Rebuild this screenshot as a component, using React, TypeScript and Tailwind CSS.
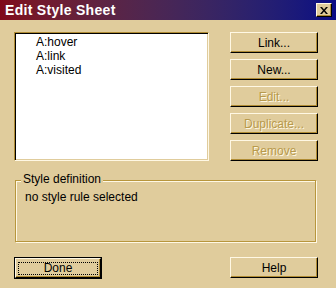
import React from 'react';

const FONT = { fontFamily: '"Liberation Sans", Arial, sans-serif' };

function Btn({ label, disabled, isDefault }: { label: string; disabled?: boolean; isDefault?: boolean }) {
  const inner = (
    <div
      className={`w-full h-full flex items-center justify-center border border-t-[#fff8e4] border-l-[#fff8e4] border-b-black border-r-black shadow-[inset_-1px_-1px_0_#b08c34] text-[12px] ${
        disabled ? 'text-[#b89a4c] [text-shadow:1px_1px_0_#fff8e4]' : 'text-black'
      }`}
    >
      {isDefault ? (
        <span className="w-[80px] h-[13px] border border-dotted border-black flex items-center justify-center">{label}</span>
      ) : (
        label
      )}
    </div>
  );
  if (isDefault) {
    return <div className="w-[88px] h-[22px] border border-black">{inner}</div>;
  }
  return <div className="w-[88px] h-[21px]">{inner}</div>;
}

export default function App() {
  return (
    <div className="w-[336px] h-[288px] bg-[#e0cc9c] flex flex-col overflow-hidden" style={FONT}>
      {/* Title bar */}
      <div className="h-[20px] bg-gradient-to-r from-[#80081a] to-[#0a0a84] flex items-center justify-between pl-[5px] pr-[4px]">
        <span className="text-white font-bold text-[14px] leading-none tracking-[0.3px]">Edit Style Sheet</span>
        <div className="w-[16px] h-[14px] bg-[#e0cc9c] border border-t-[#fff8e4] border-l-[#fff8e4] border-b-black border-r-black shadow-[inset_-1px_-1px_0_#b08c34] flex items-center justify-center">
          <svg width="8" height="7" viewBox="0 0 8 7">
            <path d="M0 0h2l2 2.5L6 0h2L5 3.5 8 7H6L4 4.5 2 7H0l3-3.5z" fill="black" />
          </svg>
        </div>
      </div>

      <div className="flex flex-col pl-[14px] pt-[12px]">
        <div className="flex">
          {/* List box */}
          <div className="w-[195px] h-[129px] bg-white border border-t-[#b08c34] border-l-[#b08c34] border-b-[#fff8e4] border-r-[#fff8e4] shadow-[inset_1px_1px_0_black,inset_-1px_-1px_0_#e0cc9c] pt-[2px] pl-[21px] text-[12px] leading-[14px] text-black">
            <div>A:hover</div>
            <div>A:link</div>
            <div>A:visited</div>
          </div>
          {/* Buttons */}
          <div className="ml-[21px] flex flex-col gap-[6px]">
            <Btn label="Link..." />
            <Btn label="New..." />
            <Btn label="Edit..." disabled />
            <Btn label="Duplicate..." disabled />
            <Btn label="Remove" disabled />
          </div>
        </div>

        {/* Group box */}
        <div className="relative mt-[19px] ml-[1px] w-[301px] h-[62px] border border-[#b8963c] shadow-[inset_1px_1px_0_#fff8e4,1px_1px_0_#fff8e4]">
          <span className="absolute left-[5px] top-[-9px] bg-[#e0cc9c] px-[2px] text-[12px] leading-[15px] text-black">Style definition</span>
          <div className="pt-[9px] pl-[9px] text-[12px] leading-[15px] text-black">no style rule selected</div>
        </div>

        {/* Bottom buttons */}
        <div className="mt-[15px] flex justify-between w-[304px]">
          <Btn label="Done" isDefault />
          <Btn label="Help" />
        </div>
      </div>
    </div>
  );
}
